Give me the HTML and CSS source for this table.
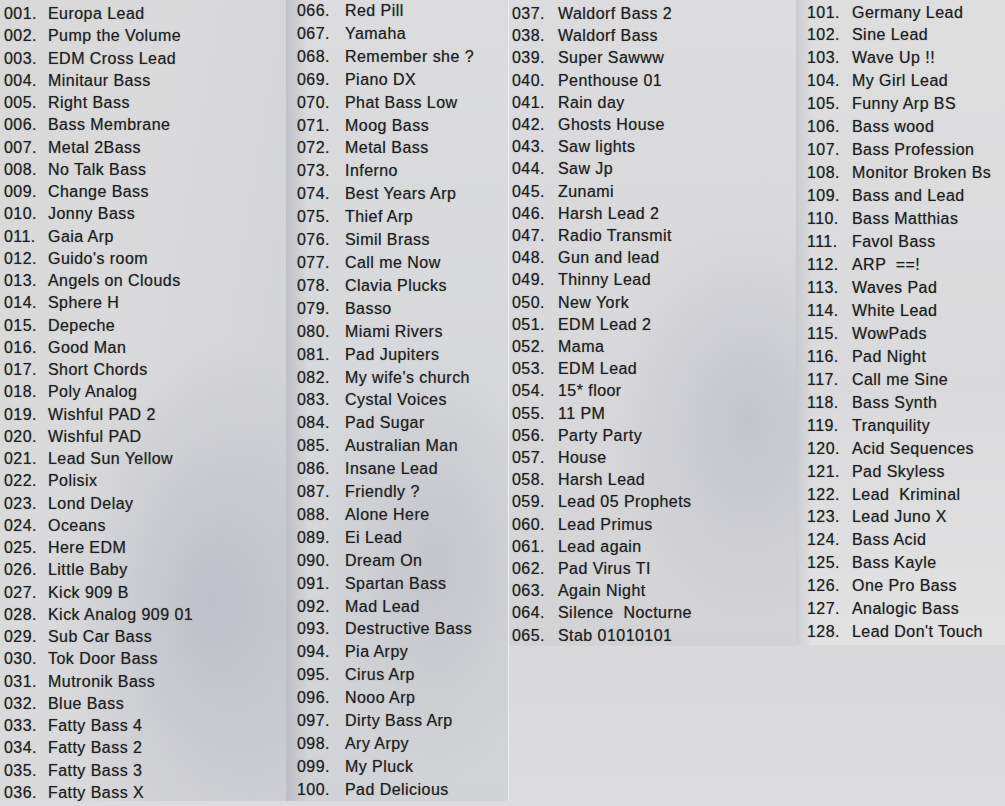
FILE: index.html
```html
<!DOCTYPE html>
<html lang="en">
<head>
  <meta charset="UTF-8" />
  <meta name="viewport" content="width=device-width, initial-scale=1.0"/>
  <title>Preset List</title>
  <link rel="stylesheet" href="styles.css">
</head>
<body>
  <div class="sheet">

    <!-- 001 - 036 -->
    <ul class="bank bank-a">
      <li><span class="num">001.</span><span class="name">Europa Lead</span></li>
      <li><span class="num">002.</span><span class="name">Pump the Volume</span></li>
      <li><span class="num">003.</span><span class="name">EDM Cross Lead</span></li>
      <li><span class="num">004.</span><span class="name">Minitaur Bass</span></li>
      <li><span class="num">005.</span><span class="name">Right Bass</span></li>
      <li><span class="num">006.</span><span class="name">Bass Membrane</span></li>
      <li><span class="num">007.</span><span class="name">Metal 2Bass</span></li>
      <li><span class="num">008.</span><span class="name">No Talk Bass</span></li>
      <li><span class="num">009.</span><span class="name">Change Bass</span></li>
      <li><span class="num">010.</span><span class="name">Jonny Bass</span></li>
      <li><span class="num">011.</span><span class="name">Gaia Arp</span></li>
      <li><span class="num">012.</span><span class="name">Guido's room</span></li>
      <li><span class="num">013.</span><span class="name">Angels on Clouds</span></li>
      <li><span class="num">014.</span><span class="name">Sphere H</span></li>
      <li><span class="num">015.</span><span class="name">Depeche</span></li>
      <li><span class="num">016.</span><span class="name">Good Man</span></li>
      <li><span class="num">017.</span><span class="name">Short Chords</span></li>
      <li><span class="num">018.</span><span class="name">Poly Analog</span></li>
      <li><span class="num">019.</span><span class="name">Wishful PAD 2</span></li>
      <li><span class="num">020.</span><span class="name">Wishful PAD</span></li>
      <li><span class="num">021.</span><span class="name">Lead Sun Yellow</span></li>
      <li><span class="num">022.</span><span class="name">Polisix</span></li>
      <li><span class="num">023.</span><span class="name">Lond Delay</span></li>
      <li><span class="num">024.</span><span class="name">Oceans</span></li>
      <li><span class="num">025.</span><span class="name">Here EDM</span></li>
      <li><span class="num">026.</span><span class="name">Little Baby</span></li>
      <li><span class="num">027.</span><span class="name">Kick 909 B</span></li>
      <li><span class="num">028.</span><span class="name">Kick Analog 909 01</span></li>
      <li><span class="num">029.</span><span class="name">Sub Car Bass</span></li>
      <li><span class="num">030.</span><span class="name">Tok Door Bass</span></li>
      <li><span class="num">031.</span><span class="name">Mutronik Bass</span></li>
      <li><span class="num">032.</span><span class="name">Blue Bass</span></li>
      <li><span class="num">033.</span><span class="name">Fatty Bass 4</span></li>
      <li><span class="num">034.</span><span class="name">Fatty Bass 2</span></li>
      <li><span class="num">035.</span><span class="name">Fatty Bass 3</span></li>
      <li><span class="num">036.</span><span class="name">Fatty Bass X</span></li>
    </ul>

    <!-- 066 - 100 -->
    <ul class="bank bank-b">
      <li><span class="num">066.</span><span class="name">Red Pill</span></li>
      <li><span class="num">067.</span><span class="name">Yamaha</span></li>
      <li><span class="num">068.</span><span class="name">Remember she ?</span></li>
      <li><span class="num">069.</span><span class="name">Piano DX</span></li>
      <li><span class="num">070.</span><span class="name">Phat Bass Low</span></li>
      <li><span class="num">071.</span><span class="name">Moog Bass</span></li>
      <li><span class="num">072.</span><span class="name">Metal Bass</span></li>
      <li><span class="num">073.</span><span class="name">Inferno</span></li>
      <li><span class="num">074.</span><span class="name">Best Years Arp</span></li>
      <li><span class="num">075.</span><span class="name">Thief Arp</span></li>
      <li><span class="num">076.</span><span class="name">Simil Brass</span></li>
      <li><span class="num">077.</span><span class="name">Call me Now</span></li>
      <li><span class="num">078.</span><span class="name">Clavia Plucks</span></li>
      <li><span class="num">079.</span><span class="name">Basso</span></li>
      <li><span class="num">080.</span><span class="name">Miami Rivers</span></li>
      <li><span class="num">081.</span><span class="name">Pad Jupiters</span></li>
      <li><span class="num">082.</span><span class="name">My wife's church</span></li>
      <li><span class="num">083.</span><span class="name">Cystal Voices</span></li>
      <li><span class="num">084.</span><span class="name">Pad Sugar</span></li>
      <li><span class="num">085.</span><span class="name">Australian Man</span></li>
      <li><span class="num">086.</span><span class="name">Insane Lead</span></li>
      <li><span class="num">087.</span><span class="name">Friendly ?</span></li>
      <li><span class="num">088.</span><span class="name">Alone Here</span></li>
      <li><span class="num">089.</span><span class="name">Ei Lead</span></li>
      <li><span class="num">090.</span><span class="name">Dream On</span></li>
      <li><span class="num">091.</span><span class="name">Spartan Bass</span></li>
      <li><span class="num">092.</span><span class="name">Mad Lead</span></li>
      <li><span class="num">093.</span><span class="name">Destructive Bass</span></li>
      <li><span class="num">094.</span><span class="name">Pia Arpy</span></li>
      <li><span class="num">095.</span><span class="name">Cirus Arp</span></li>
      <li><span class="num">096.</span><span class="name">Nooo Arp</span></li>
      <li><span class="num">097.</span><span class="name">Dirty Bass Arp</span></li>
      <li><span class="num">098.</span><span class="name">Ary Arpy</span></li>
      <li><span class="num">099.</span><span class="name">My Pluck</span></li>
      <li><span class="num">100.</span><span class="name">Pad Delicious</span></li>
    </ul>

    <!-- 037 - 065 -->
    <ul class="bank bank-c">
      <li><span class="num">037.</span><span class="name">Waldorf Bass 2</span></li>
      <li><span class="num">038.</span><span class="name">Waldorf Bass</span></li>
      <li><span class="num">039.</span><span class="name">Super Sawww</span></li>
      <li><span class="num">040.</span><span class="name">Penthouse 01</span></li>
      <li><span class="num">041.</span><span class="name">Rain day</span></li>
      <li><span class="num">042.</span><span class="name">Ghosts House</span></li>
      <li><span class="num">043.</span><span class="name">Saw lights</span></li>
      <li><span class="num">044.</span><span class="name">Saw Jp</span></li>
      <li><span class="num">045.</span><span class="name">Zunami</span></li>
      <li><span class="num">046.</span><span class="name">Harsh Lead 2</span></li>
      <li><span class="num">047.</span><span class="name">Radio Transmit</span></li>
      <li><span class="num">048.</span><span class="name">Gun and lead</span></li>
      <li><span class="num">049.</span><span class="name">Thinny Lead</span></li>
      <li><span class="num">050.</span><span class="name">New York</span></li>
      <li><span class="num">051.</span><span class="name">EDM Lead 2</span></li>
      <li><span class="num">052.</span><span class="name">Mama</span></li>
      <li><span class="num">053.</span><span class="name">EDM Lead</span></li>
      <li><span class="num">054.</span><span class="name">15* floor</span></li>
      <li><span class="num">055.</span><span class="name">11 PM</span></li>
      <li><span class="num">056.</span><span class="name">Party Party</span></li>
      <li><span class="num">057.</span><span class="name">House</span></li>
      <li><span class="num">058.</span><span class="name">Harsh Lead</span></li>
      <li><span class="num">059.</span><span class="name">Lead 05 Prophets</span></li>
      <li><span class="num">060.</span><span class="name">Lead Primus</span></li>
      <li><span class="num">061.</span><span class="name">Lead again</span></li>
      <li><span class="num">062.</span><span class="name">Pad Virus TI</span></li>
      <li><span class="num">063.</span><span class="name">Again Night</span></li>
      <li><span class="num">064.</span><span class="name">Silence  Nocturne</span></li>
      <li><span class="num">065.</span><span class="name">Stab 01010101</span></li>
    </ul>

    <!-- 101 - 128 -->
    <ul class="bank bank-d">
      <li><span class="num">101.</span><span class="name">Germany Lead</span></li>
      <li><span class="num">102.</span><span class="name">Sine Lead</span></li>
      <li><span class="num">103.</span><span class="name">Wave Up !!</span></li>
      <li><span class="num">104.</span><span class="name">My Girl Lead</span></li>
      <li><span class="num">105.</span><span class="name">Funny Arp BS</span></li>
      <li><span class="num">106.</span><span class="name">Bass wood</span></li>
      <li><span class="num">107.</span><span class="name">Bass Profession</span></li>
      <li><span class="num">108.</span><span class="name">Monitor Broken Bs</span></li>
      <li><span class="num">109.</span><span class="name">Bass and Lead</span></li>
      <li><span class="num">110.</span><span class="name">Bass Matthias</span></li>
      <li><span class="num">111.</span><span class="name">Favol Bass</span></li>
      <li><span class="num">112.</span><span class="name">ARP  ==!</span></li>
      <li><span class="num">113.</span><span class="name">Waves Pad</span></li>
      <li><span class="num">114.</span><span class="name">White Lead</span></li>
      <li><span class="num">115.</span><span class="name">WowPads</span></li>
      <li><span class="num">116.</span><span class="name">Pad Night</span></li>
      <li><span class="num">117.</span><span class="name">Call me Sine</span></li>
      <li><span class="num">118.</span><span class="name">Bass Synth</span></li>
      <li><span class="num">119.</span><span class="name">Tranquility</span></li>
      <li><span class="num">120.</span><span class="name">Acid Sequences</span></li>
      <li><span class="num">121.</span><span class="name">Pad Skyless</span></li>
      <li><span class="num">122.</span><span class="name">Lead  Kriminal</span></li>
      <li><span class="num">123.</span><span class="name">Lead Juno X</span></li>
      <li><span class="num">124.</span><span class="name">Bass Acid</span></li>
      <li><span class="num">125.</span><span class="name">Bass Kayle</span></li>
      <li><span class="num">126.</span><span class="name">One Pro Bass</span></li>
      <li><span class="num">127.</span><span class="name">Analogic Bass</span></li>
      <li><span class="num">128.</span><span class="name">Lead Don't Touch</span></li>
    </ul>

  </div>
</body>
</html>
```

FILE: styles.css
```css
html, body {
  margin: 0;
  height: 100%;
}
body {
  font-family: 'Liberation Sans', Arial, sans-serif;
  font-size: 16px;
  letter-spacing: 0.45px;
  color: #1f1f22;
  background: linear-gradient(180deg, #cfd0d3 0%, #d6d6d9 60%, #dcdcde 100%);
  overflow: hidden;
}
.sheet {
  display: flex;
  align-items: flex-start;
  width: 1005px;
  height: 806px;
}
.bank {
  list-style: none;
  margin: 0;
  box-sizing: border-box;
}
.bank li {
  display: flex;
  white-space: pre;
  text-shadow: 0 0 1px rgba(30, 30, 35, 0.5);
}
.num {
  flex: none;
}

/* column 1 */
.bank-a {
  width: 286px;
  height: 801px;
  padding: 3px 0 0 4px;
  line-height: 22.25px;
  background:
    radial-gradient(ellipse 160px 260px at 210px 600px, rgba(150, 155, 170, 0.35), transparent),
    linear-gradient(100deg, #d9d9d9 0%, #dadadc 45%, #cfd0d4 100%);
}
.bank-a .num { width: 44px; }

/* column 2 */
.bank-b {
  width: 223px;
  height: 801px;
  padding: 0 0 0 11px;
  line-height: 22.9px;
  border-right: 1px solid #eeeef0;
  background:
    linear-gradient(90deg, rgba(170, 172, 180, 0.55) 0, rgba(170, 172, 180, 0) 22px),
    radial-gradient(ellipse 120px 220px at 150px 560px, rgba(155, 158, 170, 0.3), transparent),
    linear-gradient(180deg, #dcdcde 0%, #d7d8db 50%, #d2d3d6 100%);
}
.bank-b .num { width: 48px; }

/* column 3 */
.bank-c {
  width: 287px;
  height: 646px;
  padding: 3px 0 0 3px;
  line-height: 22.2px;
  background:
    radial-gradient(ellipse 140px 200px at 240px 420px, rgba(150, 155, 170, 0.3), transparent),
    linear-gradient(180deg, #dcdcdf 0%, #d8d8db 60%, #d3d3d6 100%);
}
.bank-c .num { width: 46px; }

/* column 4 */
.bank-d {
  width: 209px;
  height: 645px;
  padding: 1.5px 0 0 11px;
  line-height: 22.96px;
  background:
    linear-gradient(90deg, rgba(175, 177, 185, 0.4) 0, rgba(175, 177, 185, 0) 16px),
    linear-gradient(180deg, #dededf 0%, #dadadc 60%, #e2e2e3 100%);
}
.bank-d .num { width: 45px; }
```
